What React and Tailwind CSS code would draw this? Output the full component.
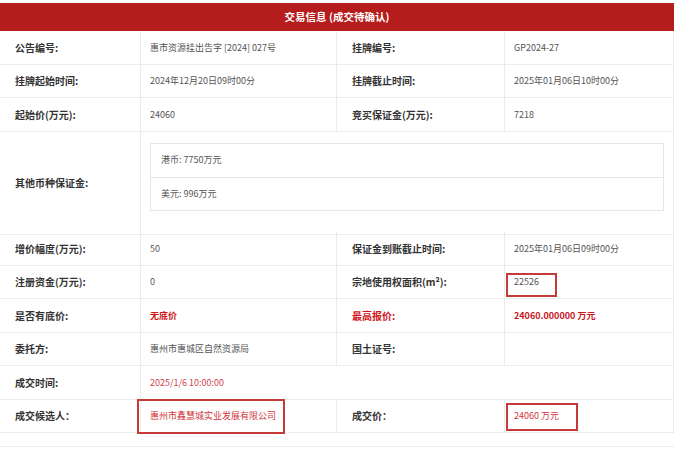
import React from 'react';

// Transaction info table (成交待确认)
const FONT = { fontFamily: '"Noto Sans CJK SC", "Noto Sans", sans-serif' };

function Label({ children, red, className = '' }) {
  return (
    <div
      className={`flex items-center pl-[15px] border-b border-r border-[#ececec] text-[10px] font-semibold ${
        red ? 'text-[#d0161d]' : 'text-[#333]'
      } ${className}`}
    >
      {children}
    </div>
  );
}

function Value({ children, className = '' }) {
  return (
    <div
      className={`relative flex items-center pl-[9px] border-b border-r border-[#ececec] text-[9px] text-[#555] ${className}`}
    >
      {children}
    </div>
  );
}

// red annotation box drawn over a cell
function Mark({ className }) {
  return <div className={`absolute border-2 border-[#c73a3a] ${className}`} />;
}

export default function App() {
  return (
    <div className="w-[674px] h-[455px] bg-white overflow-hidden" style={FONT}>
      <div className="mt-[3px] h-[28px] bg-[#b51c1c] flex items-center justify-center text-white text-[10.5px] font-semibold">
        交易信息 (成交待确认)
      </div>

      <div className="grid grid-cols-[141px_196px_168px_169px] auto-rows-[33.5px]">
        <Label>公告编号:</Label>
        <Value>惠市资源挂出告字 [2024] 027号</Value>
        <Label className="pl-[13px]">挂牌编号:</Label>
        <Value>GP2024-27</Value>

        <Label>挂牌起始时间:</Label>
        <Value>2024年12月20日09时00分</Value>
        <Label className="pl-[13px]">挂牌截止时间:</Label>
        <Value>2025年01月06日10时00分</Value>

        <Label>起始价(万元):</Label>
        <Value>24060</Value>
        <Label className="pl-[13px]">竞买保证金(万元):</Label>
        <Value>7218</Value>

        <Label className="row-span-3 h-[103px]">其他币种保证金:</Label>
        <div className="col-span-3 row-span-3 h-[103px] border-b border-r border-[#ececec] pt-[11px] pl-[9px] pr-[9px]">
          <div className="border border-[#e6e6e6] text-[9px] text-[#555]">
            <div className="h-[34px] flex items-center pl-[10px] border-b border-[#e6e6e6]">港币: 7750万元</div>
            <div className="h-[32px] flex items-center pl-[10px]">美元: 996万元</div>
          </div>
        </div>

        <Label>增价幅度(万元):</Label>
        <Value>50</Value>
        <Label className="pl-[13px]">保证金到账截止时间:</Label>
        <Value>2025年01月06日09时00分</Value>

        <Label>注册资金(万元):</Label>
        <Value>0</Value>
        <Label className="pl-[13px]">宗地使用权面积(m²):</Label>
        <Value>
          22526
          <Mark className="left-[1px] top-[7px] w-[51px] h-[24px]" />
        </Value>

        <Label>是否有底价:</Label>
        <Value className="text-[#d0161d] font-semibold">无底价</Value>
        <Label red className="pl-[13px]">最高报价:</Label>
        <Value className="text-[#c8161d] font-semibold">24060.000000 万元</Value>

        <Label>委托方:</Label>
        <Value>惠州市惠城区自然资源局</Value>
        <Label className="pl-[13px]">国土证号:</Label>
        <Value></Value>

        <Label>成交时间:</Label>
        <Value className="col-span-3 text-[#d0464b]">2025/1/6 10:00:00</Value>

        <Label>成交候选人：</Label>
        <Value className="text-[#d0363b]">
          惠州市鑫慧城实业发展有限公司
          <Mark className="left-[-4px] top-[-1px] w-[148px] h-[35px]" />
        </Value>
        <Label className="pl-[13px]">成交价：</Label>
        <Value className="text-[#d0363b]">
          24060 万元
          <Mark className="left-[1px] top-[3px] w-[72px] h-[28px]" />
        </Value>
      </div>
      <div className="h-[14px] border-b border-[#ececec]" />
    </div>
  );
}
